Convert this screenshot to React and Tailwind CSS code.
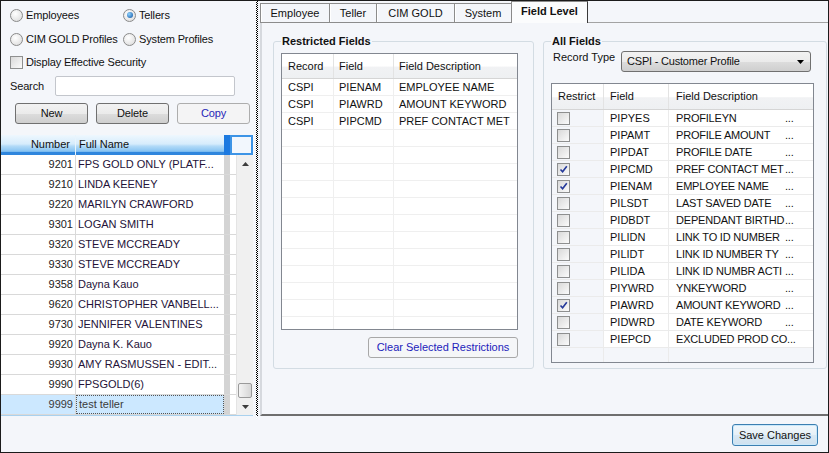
import React from "react";

const tellers = [
  ["9201", "FPS GOLD ONLY (PLATF..."],
  ["9210", "LINDA KEENEY"],
  ["9220", "MARILYN CRAWFORD"],
  ["9301", "LOGAN SMITH"],
  ["9320", "STEVE MCCREADY"],
  ["9330", "STEVE MCCREADY"],
  ["9358", "Dayna Kauo"],
  ["9620", "CHRISTOPHER VANBELL..."],
  ["9730", "JENNIFER VALENTINES"],
  ["9920", "Dayna K. Kauo"],
  ["9930", "AMY RASMUSSEN - EDIT..."],
  ["9990", "FPSGOLD(6)"],
  ["9999", "test teller"],
];

const restricted = [
  ["CSPI", "PIENAM", "EMPLOYEE NAME"],
  ["CSPI", "PIAWRD", "AMOUNT KEYWORD"],
  ["CSPI", "PIPCMD", "PREF CONTACT MET"],
];

const allFields = [
  [false, "PIPYES", "PROFILEYN"],
  [false, "PIPAMT", "PROFILE AMOUNT"],
  [false, "PIPDAT", "PROFILE DATE"],
  [true, "PIPCMD", "PREF CONTACT MET"],
  [true, "PIENAM", "EMPLOYEE NAME"],
  [false, "PILSDT", "LAST SAVED DATE"],
  [false, "PIDBDT", "DEPENDANT BIRTHD"],
  [false, "PILIDN", "LINK TO ID NUMBER"],
  [false, "PILIDT", "LINK ID NUMBER TY"],
  [false, "PILIDA", "LINK ID NUMBR ACTI"],
  [false, "PIYWRD", "YNKEYWORD"],
  [true, "PIAWRD", "AMOUNT KEYWORD"],
  [false, "PIDWRD", "DATE KEYWORD"],
  [false, "PIEPCD", "EXCLUDED PROD CO"],
];

function Radio({ checked }) {
  return (
    <span className="w-[13px] h-[13px] shrink-0 rounded-full border border-[#8a8a8a] bg-[radial-gradient(circle_at_40%_35%,#ffffff,#d8d8d8)] flex items-center justify-center">
      {checked && (
        <span className="w-[6px] h-[6px] rounded-full bg-[radial-gradient(circle_at_35%_35%,#8fd3ff,#0b4f9f)]" />
      )}
    </span>
  );
}

function Check({ checked }) {
  return (
    <span className="w-[13px] h-[13px] shrink-0 border border-[#8e8f8f] bg-[linear-gradient(135deg,#d9d9d9,#fbfbfb)] flex items-center justify-center">
      {checked && (
        <svg width="9" height="9" viewBox="0 0 9 9">
          <path d="M1.5 4.5 L3.6 6.8 L7.8 1.2" fill="none" stroke="#24399a" strokeWidth="1.6" />
        </svg>
      )}
    </span>
  );
}

function Arrow({ down, color = "#3c3c3c" }) {
  return (
    <svg width="7" height="4" viewBox="0 0 7 4">
      <path d={down ? "M0 0 L7 0 L3.5 4Z" : "M0 4 L7 4 L3.5 0Z"} fill={color} />
    </svg>
  );
}

function LeftPanel() {
  return (
    <div className="w-[254px] flex flex-col">
      <div className="pl-[9px] flex flex-col tracking-[-0.15px]">
        <div className="mt-[7px] h-[14px] flex items-center">
          <div className="w-[113px] flex items-center">
            <Radio />
            <span className="ml-[3px]">Employees</span>
          </div>
          <div className="flex items-center">
            <Radio checked />
            <span className="ml-[3px]">Tellers</span>
          </div>
        </div>
        <div className="mt-[10px] h-[14px] flex items-center">
          <div className="w-[113px] flex items-center">
            <Radio />
            <span className="ml-[3px]">CIM GOLD Profiles</span>
          </div>
          <div className="flex items-center">
            <Radio />
            <span className="ml-[3px]">System Profiles</span>
          </div>
        </div>
        <div className="mt-[9px] h-[14px] flex items-center">
          <Check />
          <span className="ml-[3px]">Display Effective Security</span>
        </div>
        <div className="mt-[7px] h-[20px] flex items-center">
          <span className="w-[45px]">Search</span>
          <div className="w-[180px] h-[20px] border border-[#c3c6cc] rounded-[2px] bg-white" />
        </div>
        <div className="mt-[7px] ml-[5px] h-[21px] flex gap-[8px]">
          <button className="w-[73px] h-[21px] border border-[#707070] rounded-[3px] bg-[linear-gradient(to_bottom,#f2f2f2_0%,#ebebeb_50%,#dddddd_50%,#cfcfcf_100%)]">
            New
          </button>
          <button className="w-[73px] h-[21px] border border-[#707070] rounded-[3px] bg-[linear-gradient(to_bottom,#f2f2f2_0%,#ebebeb_50%,#dddddd_50%,#cfcfcf_100%)]">
            Delete
          </button>
          <button className="w-[73px] h-[21px] border border-[#adadad] rounded-[3px] bg-[#f4f4f5] text-[#2626b8]">
            Copy
          </button>
        </div>
      </div>

      {/* teller grid */}
      <div className="mt-[11px] w-[252px] flex flex-col border-b border-[#a9d1ee]">
        <div className="h-[20px] flex">
          <div className="w-[223px] flex bg-[linear-gradient(to_bottom,#eef7fe_0%,#d6ecfc_45%,#b3dbf8_55%,#86c3f2_82%,#2f86dd_86%,#2f86dd_100%)]">
            <div className="w-[75px] flex items-center justify-end pr-[5px] pb-[2px] border-r border-[#e8f4fd]">
              Number
            </div>
            <div className="flex-1 flex items-center pl-[3px] pb-[2px]">Full Name</div>
          </div>
          <div className="w-[6px] bg-[#1c79e0]" />
          <div className="w-[23px] border-2 border-[#3d94e6] bg-[#f2f7fd]" />
        </div>
        <div className="flex h-[260px]">
          <div className="w-[235px] flex flex-col">
            {tellers.map(([num, name], i) => {
              const sel = i === tellers.length - 1;
              return (
                <div key={num} className="h-[20px] flex border-b border-[#d9d9d9]">
                  <div
                    className={`w-[75px] border-r border-[#d9d9d9] flex items-center justify-end pr-[2px] ${
                      sel ? "bg-[#cce8ff] text-[#3a3a3a]" : "bg-white text-[#222]"
                    }`}
                  >
                    {num}
                  </div>
                  <div
                    className={`w-[148px] flex items-center pl-[2px] whitespace-nowrap overflow-hidden ${
                      sel
                        ? "bg-[#cce8ff] text-[#3a3a3a] border border-dotted border-[#555]"
                        : "bg-white text-[#241238]"
                    }`}
                  >
                    {name}
                  </div>
                  <div className="w-[6px] bg-[#d4d4d4]" />
                  <div className="w-[6px] bg-white" />
                </div>
              );
            })}
          </div>
          <div className="w-[17px] flex flex-col bg-[#f0f0f0] border-l border-[#e4e4e4]">
            <div className="h-[17px] flex items-center justify-center">
              <Arrow />
            </div>
            <div className="flex-1" />
            <div className="h-[15px] mx-[1px] border border-[#9a9a9a] rounded-[2px] bg-[linear-gradient(to_right,#f4f4f4,#d6d6d6)]" />
            <div className="h-[17px] flex items-center justify-center">
              <Arrow down />
            </div>
          </div>
        </div>
      </div>
    </div>
  );
}

function Tab({ label, w, active }) {
  if (active) {
    return (
      <div
        className={`${w} h-[22px] flex items-center justify-center pb-[2px] font-bold border-l border-t border-[#8a8a8a] border-r border-r-[#3a3a3a] bg-[#fbfcfd]`}
      >
        {label}
      </div>
    );
  }
  return (
    <div
      className={`${w} h-[20px] flex items-center justify-center border-l border-t border-b border-[#8c8c8c] bg-[#f4f6fa] shadow-[inset_1px_0_0_#ffffff]`}
    >
      {label}
    </div>
  );
}

function RestrictedGrid() {
  const rows = [...restricted, ...Array(12).fill(["", "", ""])];
  return (
    <div className="mt-[5px] ml-[7px] w-[237px] h-[277px] border border-[#828790] bg-white flex flex-col overflow-hidden">
      <div className="h-[25px] shrink-0 flex border-b border-[#d5d5d5] bg-[linear-gradient(to_bottom,#ffffff_0%,#ffffff_50%,#f1f2f4_55%,#eef0f2_100%)]">
        <div className="w-[52px] pl-[6px] flex items-center border-r border-[#e3e3e3]">Record</div>
        <div className="w-[60px] pl-[5px] flex items-center border-r border-[#e3e3e3]">Field</div>
        <div className="flex-1 pl-[5px] flex items-center">Field Description</div>
      </div>
      {rows.map((r, i) => (
        <div key={i} className="h-[17px] shrink-0 flex border-b border-[#efefef]">
          <div className="w-[52px] pl-[6px] flex items-center border-r border-[#efefef]">{r[0]}</div>
          <div className="w-[60px] pl-[5px] flex items-center border-r border-[#efefef]">{r[1]}</div>
          <div className="flex-1 pl-[5px] flex items-center whitespace-nowrap">{r[2]}</div>
        </div>
      ))}
    </div>
  );
}

function AllFieldsGrid() {
  return (
    <div className="mt-[11px] ml-[7px] w-[263px] h-[280px] border border-[#828790] bg-[#f4f6fa] flex flex-col overflow-hidden">
      <div className="h-[26px] shrink-0 flex border-b border-[#d5d5d5] bg-[linear-gradient(to_bottom,#ffffff_0%,#ffffff_50%,#f1f2f4_55%,#eef0f2_100%)]">
        <div className="w-[52px] pl-[6px] flex items-center border-r border-[#e3e3e3]">Restrict</div>
        <div className="w-[65px] pl-[6px] flex items-center border-r border-[#e3e3e3]">Field</div>
        <div className="flex-1 pl-[7px] flex items-center">Field Description</div>
      </div>
      {allFields.map(([on, field, desc]) => (
        <div key={field} className="h-[17px] shrink-0 flex border-b border-[#ebebeb]">
          <div className="w-[52px] pl-[5px] flex items-center border-r border-[#ebebeb]">
            <Check checked={on} />
          </div>
          <div className="w-[65px] pl-[6px] flex items-center bg-white border-r border-[#ebebeb]">{field}</div>
          <div className="flex-1 pl-[7px] flex items-center bg-white whitespace-nowrap tracking-[-0.2px]">
            <span className="min-w-[109px]">{desc}</span>
            <span>...</span>
          </div>
        </div>
      ))}
      <div className="h-[17px] shrink-0 flex">
        <div className="w-[52px] border-r border-[#ebebeb]" />
        <div className="w-[65px] border-r border-[#ebebeb]" />
        <div className="flex-1" />
      </div>
    </div>
  );
}

function RightPanel() {
  return (
    <div className="flex-1 flex flex-col pl-[2px]">
      <div className="h-[22px] flex items-end">
        <Tab label="Employee" w="w-[69px]" />
        <Tab label="Teller" w="w-[47px]" />
        <Tab label="CIM GOLD" w="w-[78px]" />
        <Tab label="System" w="w-[57px]" />
        <Tab label="Field Level" w="w-[77px]" active />
        <div className="flex-1 self-stretch border-b border-[#a3a3a3]" />
      </div>
      <div className="flex-1 flex pt-[12px] pl-[11px] border-l-2 border-[#d6d9de] border-b-2 border-b-[#6e6e6e]">
        <fieldset className="w-[261px] h-[334px] border border-[#d3dce3] rounded-[3px]">
          <legend className="ml-[7px] px-[1px] font-bold leading-[13px]">Restricted Fields</legend>
          <div className="flex flex-col">
            <RestrictedGrid />
            <button className="mt-[7px] ml-[94px] w-[150px] h-[21px] border border-[#a8a8a8] rounded-[3px] bg-[#f5f6f8] text-[#2222bb]">
              Clear Selected Restrictions
            </button>
          </div>
        </fieldset>
        <fieldset className="ml-[9px] w-[284px] h-[334px] border border-[#d3dce3] rounded-[3px]">
          <legend className="ml-[7px] px-[1px] font-bold leading-[13px]">All Fields</legend>
          <div className="flex flex-col">
            <div className="mt-[3px] h-[21px] flex items-start">
              <span className="ml-[9px] w-[68px] leading-[13px]">Record Type</span>
              <div className="w-[190px] h-[21px] border border-[#707070] rounded-[3px] bg-[linear-gradient(to_bottom,#f2f2f2_0%,#ebebeb_50%,#dddddd_50%,#cfcfcf_100%)] flex items-center justify-between pl-[5px] pr-[6px] tracking-[-0.2px]">
                <span>CSPI - Customer Profile</span>
                <Arrow down color="#000" />
              </div>
            </div>
            <AllFieldsGrid />
          </div>
        </fieldset>
      </div>
    </div>
  );
}

export default function App() {
  return (
    <div className="w-[829px] h-[453px] flex flex-col border border-[#1b1b1b] bg-[#f4f6fa] font-['Liberation_Sans',Arial,sans-serif] text-[11px] leading-[13px] text-[#111] overflow-hidden">
      <div className="h-[415px] flex">
        <LeftPanel />
        <div className="w-[3px] flex justify-center">
          <div className="w-[2px] bg-[conic-gradient(#000_25%,#fff_0_50%,#000_0_75%,#fff_0)] bg-[length:2px_2px]" />
        </div>
        <RightPanel />
      </div>
      <div className="flex-1 flex justify-end items-start pt-[8px] pr-[10px]">
        <button className="w-[86px] h-[22px] border border-[#3c7fb1] rounded-[3px] bg-[linear-gradient(to_bottom,#f1f7fb_0%,#e6f0f7_50%,#d9e8f3_50%,#cfe1ef_100%)] shadow-[inset_0_0_0_1px_#c9e8fa]">
          Save Changes
        </button>
      </div>
    </div>
  );
}
